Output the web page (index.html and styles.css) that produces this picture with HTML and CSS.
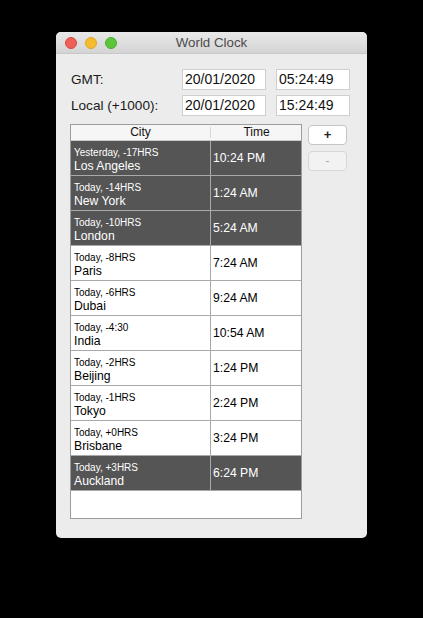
FILE: index.html
```html
<!DOCTYPE html>
<html>
<head>
<meta charset="utf-8">
<title>World Clock</title>
<link rel="stylesheet" href="styles.css">
</head>
<body>
<div class="window">
  <div class="titlebar">
    <div class="lights">
      <span class="light red"></span>
      <span class="light yellow"></span>
      <span class="light green"></span>
    </div>
    <div class="title">World Clock</div>
  </div>
  <div class="content">
    <div class="form">
      <div class="label">GMT:</div>
      <div class="field date">20/01/2020</div>
      <div class="field time">05:24:49</div>
      <div class="label">Local (+1000):</div>
      <div class="field date">20/01/2020</div>
      <div class="field time">15:24:49</div>
    </div>
    <div class="main">
      <div class="table">
        <div class="thead">
          <div class="th th-city">City</div>
          <div class="th th-time">Time</div>
        </div>
        <div class="row dark"><div class="cell city"><div class="sub">Yesterday, -17HRS</div><div class="name">Los Angeles</div></div><div class="cell tm">10:24 PM</div></div>
        <div class="row dark"><div class="cell city"><div class="sub">Today, -14HRS</div><div class="name">New York</div></div><div class="cell tm">1:24 AM</div></div>
        <div class="row dark"><div class="cell city"><div class="sub">Today, -10HRS</div><div class="name">London</div></div><div class="cell tm">5:24 AM</div></div>
        <div class="row"><div class="cell city"><div class="sub">Today, -8HRS</div><div class="name">Paris</div></div><div class="cell tm">7:24 AM</div></div>
        <div class="row"><div class="cell city"><div class="sub">Today, -6HRS</div><div class="name">Dubai</div></div><div class="cell tm">9:24 AM</div></div>
        <div class="row"><div class="cell city"><div class="sub">Today, -4:30</div><div class="name">India</div></div><div class="cell tm">10:54 AM</div></div>
        <div class="row"><div class="cell city"><div class="sub">Today, -2HRS</div><div class="name">Beijing</div></div><div class="cell tm">1:24 PM</div></div>
        <div class="row"><div class="cell city"><div class="sub">Today, -1HRS</div><div class="name">Tokyo</div></div><div class="cell tm">2:24 PM</div></div>
        <div class="row"><div class="cell city"><div class="sub">Today, +0HRS</div><div class="name">Brisbane</div></div><div class="cell tm">3:24 PM</div></div>
        <div class="row dark"><div class="cell city"><div class="sub">Today, +3HRS</div><div class="name">Auckland</div></div><div class="cell tm">6:24 PM</div></div>
      </div>
      <div class="buttons">
        <div class="btn">+</div>
        <div class="btn disabled">-</div>
      </div>
    </div>
  </div>
</div>
</body>
</html>
```
FILE: styles.css
```css
html, body {
  margin: 0;
  padding: 0;
  background: #000;
}
body {
  padding: 32px 0 0 56px;
  font-family: "Liberation Sans", Arial, sans-serif;
  color: #000;
}
.window {
  width: 311px;
  height: 506px;
  background: #ececec;
  border-radius: 5px;
  overflow: hidden;
  box-sizing: border-box;
}
.titlebar {
  height: 21px;
  border-bottom: 1px solid #c9c9c9;
  background: linear-gradient(#e9e8e9, #d5d4d5);
  display: flex;
  align-items: center;
  position: relative;
}
.lights {
  display: flex;
  gap: 8px;
  padding-left: 9px;
  padding-top: 1px;
}
.light {
  width: 12px;
  height: 12px;
  border-radius: 50%;
  box-sizing: border-box;
}
.red { background: #ed5f57; border: 1px solid #d9493f; }
.yellow { background: #f4bd2f; border: 1px solid #dea32a; }
.green { background: #5cc53b; border: 1px solid #4aad30; }
.title {
  position: absolute;
  left: 0;
  right: 0;
  top: 0;
  line-height: 22px;
  text-align: center;
  font-size: 13.3px;
  color: #4b4b4b;
  pointer-events: none;
}
.content {
  padding: 15px 0 0 14px;
}
.form {
  display: grid;
  grid-template-columns: 102px 84px 74px;
  column-gap: 10px;
  row-gap: 5px;
  align-items: center;
}
.label {
  font-size: 13.6px;
  color: #1a1a1a;
  padding-left: 1px;
  white-space: nowrap;
}
.field {
  height: 21px;
  box-sizing: border-box;
  background: #fff;
  border: 1px solid #cfcfcf;
  font-size: 14px;
  line-height: 19px;
  padding-left: 2px;
  color: #111;
}
.main {
  display: flex;
  gap: 6px;
  margin-top: 8px;
}
.table {
  width: 232px;
  height: 395px;
  box-sizing: border-box;
  border: 1px solid #9c9c9c;
  background: #fff;
}
.thead {
  display: flex;
  height: 15px;
  background: #f6f6f6;
  border-bottom: 1px solid #c9c9c9;
  line-height: 15px;
  font-size: 12px;
}
.th {
  text-align: center;
  color: #111;
}
.th-city {
  width: 139px;
  position: relative;
}
.th-city::after {
  content: "";
  position: absolute;
  right: -1px;
  top: 2px;
  width: 1px;
  height: 11px;
  background: #d8d8d8;
}
.th-time {
  flex: 1;
  padding-left: 2px;
}
.row {
  display: flex;
  height: 35px;
  box-sizing: border-box;
  border-bottom: 1px solid #a9a9a9;
}
.row.dark {
  background: #555555;
  color: #fff;
}
.cell.city {
  border-right: 1px solid #a9a9a9;
  padding: 6px 0 0 3px;
  width: 136px;
}
.sub {
  font-size: 10px;
  line-height: 12px;
}
.name {
  font-size: 12.2px;
  line-height: 14px;
}
.cell.tm {
  flex: 1;
  display: flex;
  align-items: center;
  padding-left: 2px;
  padding-bottom: 1px;
  font-size: 12.2px;
}
.buttons {
  display: flex;
  flex-direction: column;
  gap: 6px;
  padding-top: 1px;
}
.btn {
  width: 39px;
  height: 20px;
  box-sizing: border-box;
  background: #fff;
  border: 1px solid #c6c6c6;
  border-radius: 4px;
  text-align: center;
  font-size: 13px;
  font-weight: bold;
  line-height: 18px;
  color: #222;
}
.btn.disabled {
  background: #f2f2f2;
  border-color: #d6d6d6;
  color: #b0b0b0;
  font-weight: normal;
}
```
